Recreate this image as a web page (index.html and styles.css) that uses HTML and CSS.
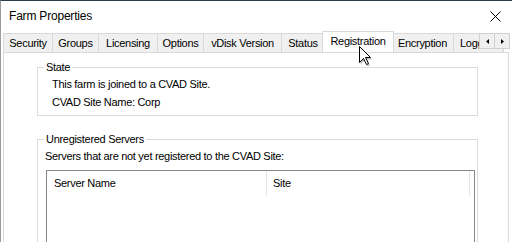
FILE: index.html
```html
<!DOCTYPE html>
<html lang="en">
<head>
    <meta charset="UTF-8">
    <title>Farm Properties</title>
    <link rel="stylesheet" href="styles.css">
</head>
<body>
    <div class="window">
        <div class="titlebar">
            <span class="title">Farm Properties</span>
            <svg class="close" width="11" height="11" viewBox="0 0 11 11">
                <path d="M0.5 0.5 L10.5 10.5 M10.5 0.5 L0.5 10.5" stroke="#000" stroke-width="1" fill="none"/>
            </svg>
        </div>
        <div class="tabstrip">
            <div class="tabs">
                <div class="tab tab-security">Security</div>
                <div class="tab tab-groups">Groups</div>
                <div class="tab tab-licensing">Licensing</div>
                <div class="tab tab-options">Options</div>
                <div class="tab tab-vdisk">vDisk Version</div>
                <div class="tab tab-status">Status</div>
                <div class="tab active">Registration</div>
                <div class="tab tab-encryption">Encryption</div>
                <div class="tab">Logging</div>
            </div>
            <div class="scroller">
                <div class="scroll-btn">
                    <svg width="3" height="5" viewBox="0 0 3 5"><path d="M3 0 L0 2.5 L3 5 Z" fill="#000"/></svg>
                </div>
                <div class="scroll-btn">
                    <svg width="3" height="5" viewBox="0 0 3 5"><path d="M0 0 L3 2.5 L0 5 Z" fill="#000"/></svg>
                </div>
            </div>
        </div>
        <div class="panel">
            <fieldset class="group state">
                <legend>State</legend>
                <p>This farm is joined to a CVAD Site.</p>
                <p>CVAD Site Name: Corp</p>
            </fieldset>
            <fieldset class="group unregistered">
                <legend>Unregistered Servers</legend>
                <p>Servers that are not yet registered to the CVAD Site:</p>
                <div class="listview">
                    <div class="list-header">
                        <div class="col">Server Name</div>
                        <div class="col">Site</div>
                    </div>
                </div>
            </fieldset>
        </div>
        <svg class="cursor" width="14" height="21" viewBox="0 0 14 21">
            <path d="M1.5 2.5 L1.5 18.5 L5.5 14.5 L8.5 20.5 L11 19.5 L8 13.5 L13.5 13.5 Z" fill="rgba(0,0,0,0.25)"/>
            <path d="M0.5 0.5 L0.5 16.5 L4.5 12.5 L7.5 18.5 L9.5 17.5 L6.5 11.5 L11.5 11.5 Z" fill="#fff" stroke="#000" stroke-width="1" stroke-linejoin="miter"/>
        </svg>
    </div>
</body>
</html>
```

FILE: styles.css
```css
* {
    box-sizing: border-box;
}

html, body {
    margin: 0;
    height: 100%;
    overflow: hidden;
}

body {
    font-family: "Liberation Sans", Arial, sans-serif;
    font-size: 11px;
    letter-spacing: -0.3px;
    color: #000;
    background: #fff;
}

.window {
    position: relative;
    height: 242px;
    overflow: hidden;
    border-top: 1px solid #2f3d4c;
    border-left: 1px solid #9b9b9b;
    display: flex;
    flex-direction: column;
}

.titlebar {
    height: 30px;
    flex: none;
    display: flex;
    align-items: center;
    justify-content: space-between;
    padding: 0 11px 0 8px;
    font-size: 12px;
    letter-spacing: -0.2px;
}

.close {
    display: block;
}

.tabstrip {
    position: relative;
    height: 21px;
    flex: none;
    padding-left: 2px;
    overflow: hidden;
}

.tabs {
    display: flex;
    align-items: flex-end;
    height: 100%;
}

.tab {
    flex: none;
    height: 19px;
    line-height: 18px;
    padding: 0 6px;
    margin-left: -1px;
    border: 1px solid #d9d9d9;
    border-bottom: none;
    background: #f0f0f0;
    white-space: nowrap;
    text-align: center;
}

.tab:first-child {
    margin-left: 0;
}

.tab-security { width: 50px; padding: 0; }
.tab-groups { width: 47px; padding: 0; }
.tab-licensing { width: 60px; padding: 0; }
.tab-options { width: 47px; padding: 0; }
.tab-vdisk { width: 79px; padding: 0; }
.tab-status { width: 44px; padding: 0; }
.tab-encryption { width: 63px; padding: 0; }

.tab.active {
    position: relative;
    z-index: 1;
    width: 72px;
    height: 22px;
    line-height: 19px;
    padding: 0;
    margin: 0 -2px -1px -3px;
    background: #fff;
}

.scroller {
    position: absolute;
    right: 2px;
    top: 2px;
    display: flex;
    z-index: 2;
}

.scroll-btn {
    width: 16px;
    height: 16px;
    margin-left: -1px;
    border: 1px solid #d0d0d0;
    background: #f0f0f0;
    display: flex;
    align-items: center;
    justify-content: center;
}

.scroll-btn svg {
    display: block;
}

.panel {
    flex: 1;
    margin: 0 3px 0 2px;
    border: 1px solid #d9d9d9;
    border-bottom: none;
    padding: 8px 30px 0 33px;
}

.group {
    margin: 0;
    padding: 1px 0 4px 6px;
    border: 1px solid #dcdcdc;
    min-width: 0;
}

.group legend {
    padding: 0 2px;
    line-height: 13px;
}

.group p {
    margin: 0;
    line-height: 18px;
}

.state p {
    padding-left: 8px;
}

.unregistered {
    margin-top: 17px;
    padding-bottom: 0;
}

.unregistered p {
    padding-left: 1px;
}

.listview {
    margin: 5px 2px 0 2px;
    height: 120px;
    border: 1px solid #828790;
}

.list-header {
    display: grid;
    grid-template-columns: 220px 203px;
    height: 25px;
}

.col {
    line-height: 25px;
    padding-left: 7px;
    border-right: 1px solid #e5e5e5;
}

.col + .col {
    padding-left: 6px;
}

.cursor {
    position: absolute;
    left: 358px;
    top: 45px;
    z-index: 5;
}
```
